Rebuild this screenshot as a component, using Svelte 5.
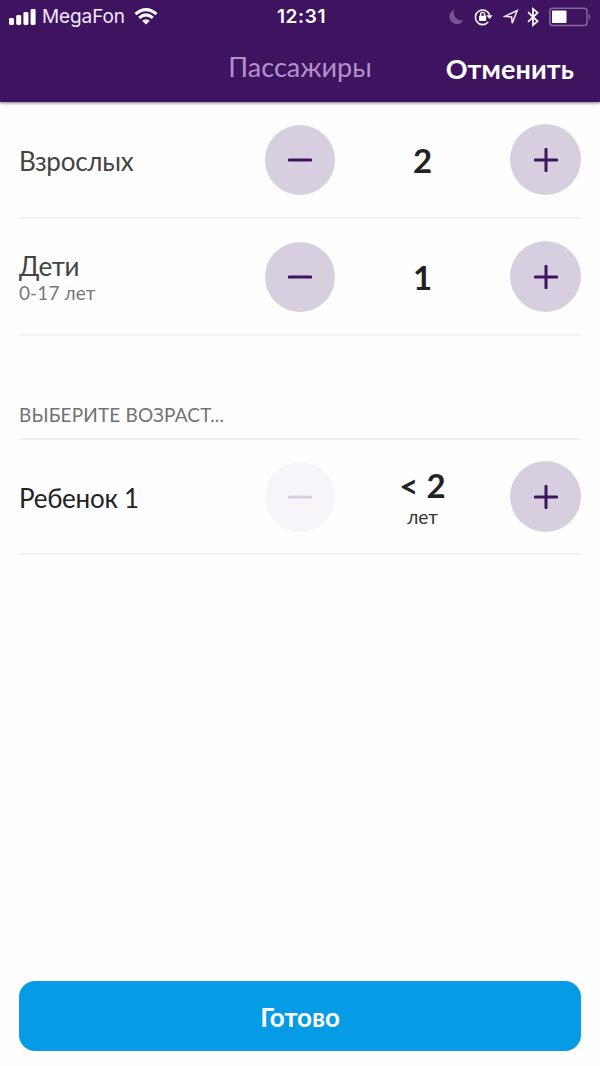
<script>
  const rows = [
    { label: 'Взрослых', note: '', value: '2', unit: '', off: false, kind: 'adults' },
    { label: 'Дети', note: '0-17 лет', value: '1', unit: '', off: false, kind: 'children' }
  ];
  const ages = [
    { label: 'Ребенок 1', note: '', value: '< 2', unit: 'лет', off: true, kind: 'age' }
  ];
</script>

{#snippet stepper(row)}
  <div class="row {row.kind}">
    <div class="label">
      <span class="name">{row.label}</span>
      {#if row.note}<span class="note">{row.note}</span>{/if}
    </div>
    <button class="round minus" disabled={row.off} aria-label="−">
      <svg width="24" height="24" viewBox="0 0 24 24"><path d="M1.3 12H22.7" /></svg>
    </button>
    <div class="count">
      <span class="value">{row.value}</span>
      {#if row.unit}<span class="unit">{row.unit}</span>{/if}
    </div>
    <button class="round" aria-label="+">
      <svg width="24" height="24" viewBox="0 0 24 24"><path d="M1.3 12H22.7M12 1.3V22.7" /></svg>
    </button>
  </div>
{/snippet}

<div class="screen">
  <header>
    <div class="status">
      <div class="carrier">
        <svg class="signal" width="27" height="16" viewBox="0 0 27 16" fill="#fff">
          <rect x="0" y="9" width="5" height="7" rx="1.4" />
          <rect x="7.2" y="6" width="5" height="10" rx="1.4" />
          <rect x="14.4" y="3" width="5" height="13" rx="1.4" />
          <rect x="21.6" y="0" width="5" height="16" rx="1.4" />
        </svg>
        <span>MegaFon</span>
        <svg class="wifi" width="24" height="17" viewBox="0 0 24 17" fill="none" stroke="#fff" stroke-width="3.1">
          <path d="M1.5 6.1Q12 -2.8 22.5 6.1" />
          <path d="M5.2 9.9Q12 4 18.8 9.9" />
          <path d="M8.2 12.8Q12 9.5 15.8 12.8L12 16.6Z" fill="#fff" stroke="none" />
        </svg>
      </div>
      <div class="time">12:31</div>
      <div class="indicators">
        <svg width="15" height="16" viewBox="0 0 15 16"><path d="M5.2.8A7.4 7.4 0 1 0 14.3 11.3A8 8 0 0 1 5.2.8Z" fill="#755593" /></svg>
        <svg class="lock" width="19" height="18" viewBox="0 0 19 18">
          <path d="M14.2 14.1A7.3 7.3 0 1 1 15.6 7" fill="none" stroke="#fff" stroke-width="1.6" />
          <path d="M12.3 7.2H18.7L15.6 11Z" fill="#fff" />
          <rect x="5" y="7.8" width="7.2" height="5.2" rx=".6" fill="#fff" />
          <path d="M6.6 8V6.4a2 2 0 0 1 4 0V8" fill="none" stroke="#fff" stroke-width="1.4" />
        </svg>
        <svg class="arrow" width="16" height="16" viewBox="0 0 16 16" fill="none" stroke="#f4e6ff" stroke-width="1.5"><path d="M1.8 7.4L14.2 1.5L9.2 14.1L8.6 8Z" /></svg>
        <svg class="bluetooth" width="12" height="20" viewBox="0 0 12 20" fill="none" stroke="#fff" stroke-width="1.7"><path d="M1 5.2L10.6 14.3L6 18.1V1.9L10.6 5.7L1 14.8" /></svg>
        <svg class="battery" width="43" height="20" viewBox="0 0 43 20">
          <rect x=".8" y="1.3" width="37.2" height="17.2" rx="2.8" fill="none" stroke="#8468a3" stroke-width="1.5" />
          <rect x="3" y="3.6" width="14.5" height="12.4" rx=".8" fill="#fff" />
          <path d="M39.7 6.5Q42.9 9.8 39.7 13.1Z" fill="#8468a3" />
        </svg>
      </div>
    </div>
    <div class="bar">
      <h1>Пассажиры</h1>
      <button class="cancel">Отменить</button>
    </div>
  </header>

  <main>
    {#each rows as row}{@render stepper(row)}{/each}
    <h2>ВЫБЕРИТЕ ВОЗРАСТ...</h2>
    {#each ages as row}{@render stepper(row)}{/each}
  </main>

  <footer><button class="done">Готово</button></footer>
</div>

<style>
  :global(body) { margin: 0; background: #fefefe; }
  * { box-sizing: border-box; }
  button { border: 0; padding: 0; font: inherit; }
  svg { display: block; flex: none; }
  .screen {
    width: 600px; height: 1066px; display: flex; flex-direction: column;
    background: #fefefe; color: #222; font-family: Lato, 'Open Sans', sans-serif; overflow: hidden;
  }
  header {
    height: 102px; flex: none; background: #3e1460; color: #fff;
    box-shadow: 0 1px 3px rgba(40, 20, 50, .6);
  }
  .status {
    height: 33px; display: grid; grid-template-columns: 1fr 60px 1fr; align-items: center;
    padding: 0 9px; font-family: Inter, sans-serif; font-size: 19px; line-height: 33px;
  }
  .carrier { display: flex; align-items: center; }
  .carrier span { margin-left: 6px; width: 83px; letter-spacing: -.1px; white-space: nowrap; color: #f3e8fb; }
  .wifi { margin-left: 9px; }
  .time { text-align: center; font-weight: 600; letter-spacing: .6px; padding-left: 3px; white-space: nowrap; }
  .indicators { display: flex; align-items: center; justify-content: flex-end; margin-right: -1px; }
  .lock { margin-left: 10px; }
  .arrow { margin-left: 10px; }
  .bluetooth { margin-left: 8px; }
  .battery { margin-left: 10px; }
  .bar { height: 69px; display: grid; grid-template-columns: 1fr auto 1fr; align-items: center; padding: 0 26px; }
  h1 { grid-column: 2; margin: 0; padding-bottom: 1px; font-size: 27px; line-height: 34px; font-weight: 400; color: #b290cb; }
  .cancel { justify-self: end; background: none; color: #fff; font-size: 27px; line-height: 34px; font-weight: 700; letter-spacing: .1px; padding-top: 3px; }
  main { flex: 1; padding: 0 19px; }
  .row {
    height: 117px; display: grid; grid-template-columns: 246px 70px 1fr 71px;
    align-items: center; border-bottom: 2px solid #f2f2f2;
  }
  .age { height: 115px; }
  .label, .count { display: flex; flex-direction: column; }
  .count { align-items: center; }
  .name { font-size: 26px; line-height: 32px; letter-spacing: -.25px; color: #444; }
  .adults .name { padding-top: 3px; }
  .age .name { color: #222; padding-top: 3px; }
  .note { font-size: 19px; line-height: 22px; letter-spacing: .1px; color: #777; }
  .value { font-size: 33px; line-height: 40px; font-weight: 700; }
  .unit { font-size: 19px; line-height: 22px; color: #333; padding-top: 1px; }
  .round {
    width: 71px; height: 71px; border-radius: 50%; background: #d7cfe0; color: #3e1460;
    display: flex; align-items: center; justify-content: center;
  }
  .minus { width: 70px; height: 70px; }
  .round path { fill: none; stroke: currentColor; stroke-width: 3; stroke-linecap: round; }
  .round:disabled { background: #f7f5f9; color: #d8d0e0; }
  h2 {
    margin: 0; height: 104px; padding-top: 67px; border-bottom: 2px solid #f0f0f0;
    font-size: 19px; line-height: 24px; font-weight: 400; letter-spacing: .15px; color: #727272;
  }
  footer { padding: 0 19px 15px; }
  .done {
    width: 100%; height: 70px; border-radius: 16px; background: #059be5; color: #fff;
    font-size: 26px; font-weight: 700; letter-spacing: -.1px; display: flex; align-items: center; justify-content: center; padding-top: 1px;
  }
</style>
